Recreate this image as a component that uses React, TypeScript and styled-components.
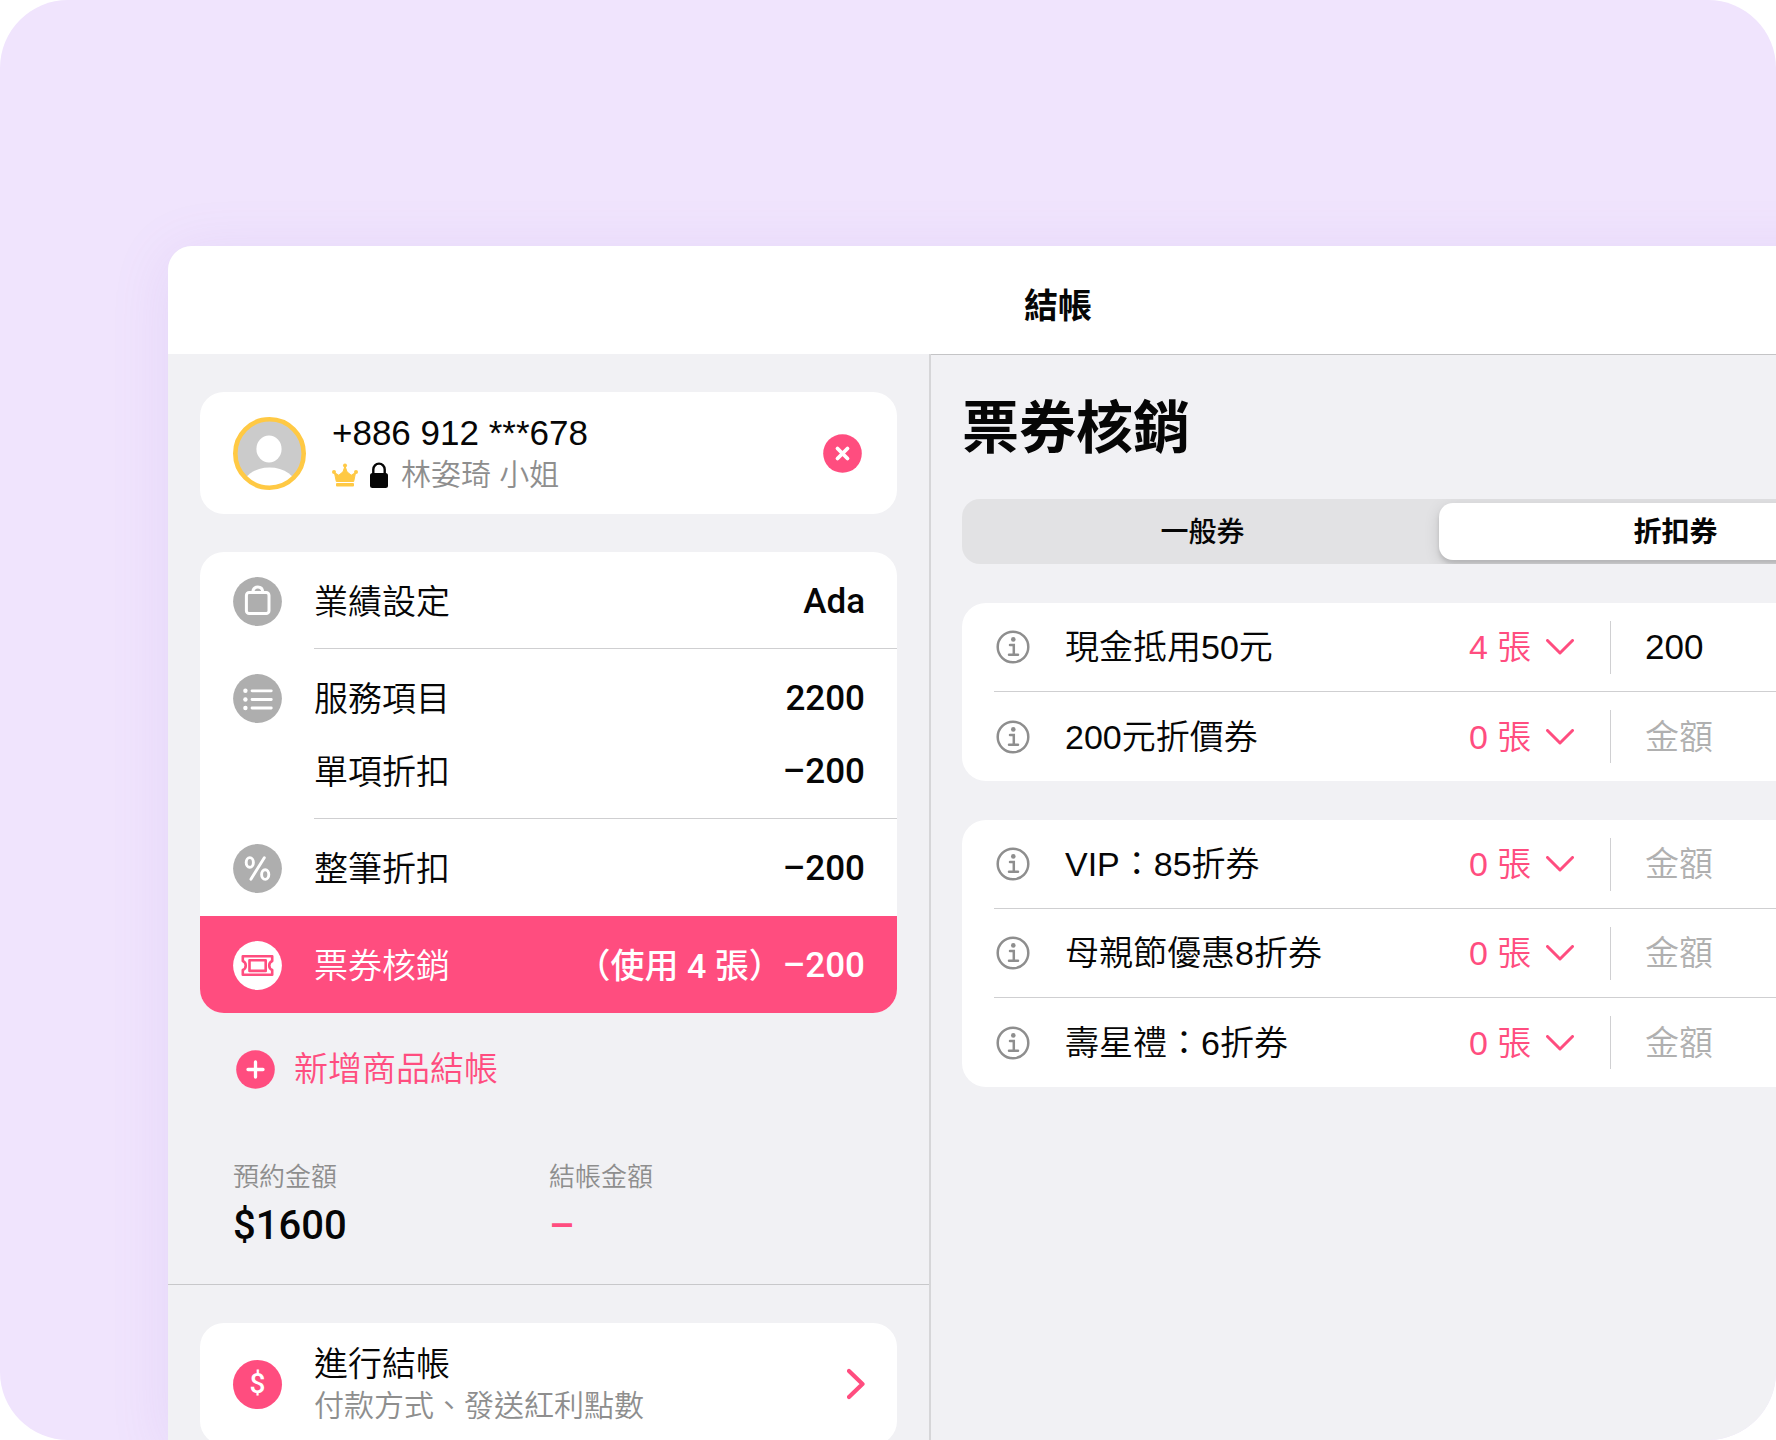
import React, { useState } from "react";
import styled, { createGlobalStyle, css } from "styled-components";

const pink = "#ff4d7f";
const line = "#cfcfd1";
const latin = `Roboto, "Noto Sans CJK TC", sans-serif`;
const body = `"Liberation Sans", "Noto Sans CJK TC", sans-serif`;

const GlobalStyle = createGlobalStyle`
  *, *::before, *::after { box-sizing: border-box; }
  body { margin: 0; background: #fff; font-family: ${body}; font-weight: 350; color: #060606; }
  button, input, select { font: inherit; color: inherit; background: none; border: 0; margin: 0; padding: 0; outline: 0; }
  button, select { cursor: pointer; }
  h1, h2, p, dl, dd, dt, ul { margin: 0; padding: 0; font-weight: inherit; }
  ul { list-style: none; }
`;

const Stage = styled.div`
  height: 100vh;
  overflow: hidden;
  border-radius: 68px;
  background: #f0e4fd;
  padding: 246px 0 0 168px;
`;

const Window = styled.div`
  display: flex;
  flex-direction: column;
  min-height: 100%;
  margin-right: -172px;
  border-radius: 24px 0 0 0;
  background: #f1f1f4;
  box-shadow: 0 8px 60px rgba(150, 110, 210, 0.12);
`;

const TitleBar = styled.header`
  display: flex;
  align-items: center;
  justify-content: center;
  height: 108px;
  padding-top: 12px;
  border-radius: 24px 0 0 0;
  background: #fff;
`;

const Title = styled.h2`
  font-size: 34px;
  font-weight: 700;
  line-height: 48px;
`;

const Panes = styled.div`
  display: flex;
  flex: 1;
`;

const Sidebar = styled.aside`
  flex: 0 0 763px;
  border-right: 2px solid #d6d6d8;
`;

const SidebarSection = styled.section`
  display: flex;
  flex-direction: column;
  padding: 38px 32px 0;
`;

const Card = styled.div`
  border-radius: 24px;
  background: #fff;
  overflow: hidden;
`;

const PersonCard = styled(Card)`
  display: flex;
  align-items: center;
  height: 122px;
  padding: 0 32px 0 33px;
  gap: 26px;
  margin-bottom: 38px;
`;

const Stack = styled.div`
  flex: 1;
  min-width: 0;
  padding-top: 2px;
  text-align: left;
`;

const Primary = styled.p`
  font-size: 34px;
  line-height: 42px;
`;

const Phone = styled.p`
  font-size: 35px;
  line-height: 42px;
`;

const Secondary = styled.p`
  display: flex;
  align-items: center;
  font-size: 30px;
  line-height: 42px;
  color: #8e8e8e;
`;

const Crown = styled.svg`
  width: 26px;
  height: 24px;
  margin-right: 12px;
`;

const Lock = styled.svg`
  width: 18px;
  height: 26px;
  margin-right: 13px;
`;

const IconButton = styled.button`
  width: 45px;
  height: 45px;
`;

const Glyph = styled.svg<{ $size: number }>`
  display: block;
  flex: none;
  width: ${(p) => p.$size}px;
  height: ${(p) => p.$size}px;
`;

const Item = styled.button<{ $active?: boolean }>`
  display: grid;
  grid-template-columns: 49px 1fr;
  column-gap: 32px;
  width: 100%;
  padding-left: 33px;
  text-align: left;
  ${(p) => p.$active && css`
    background: ${pink};
    color: #fff;
  `}
`;

const IconSlot = styled.span`
  padding-top: 25px;
`;

const ItemLines = styled.span<{ $last?: boolean }>`
  display: grid;
  row-gap: 25px;
  padding: 26px 32px 22px 0;
  border-bottom: 1px solid ${(p) => (p.$last ? "transparent" : line)};
`;

const ItemLine = styled.span`
  display: flex;
  align-items: center;
  justify-content: space-between;
  height: 48px;
  font-size: 34px;
  line-height: 48px;
`;

const Value = styled.span`
  display: flex;
  font-family: ${latin};
  font-size: 35px;
  font-weight: 500;
`;

const Used = styled.span`
  font-size: 34px;
`;

const AddButton = styled.button`
  display: flex;
  align-items: center;
  align-self: flex-start;
  gap: 16px;
  height: 48px;
  margin: 32px 0 0 33px;
  font-size: 34px;
  line-height: 48px;
  color: ${pink};
`;

const Totals = styled.dl`
  display: grid;
  grid-template-columns: 1fr 1fr;
  margin: 64px 32px 0 33px;
  padding-bottom: 29px;
`;

const TotalLabel = styled.dt`
  font-size: 26px;
  line-height: 40px;
  color: #8e8e8e;
`;

const TotalValue = styled.dd<{ $accent?: boolean }>`
  font-family: ${latin};
  font-size: 40px;
  font-weight: 500;
  line-height: 58px;
  color: ${(p) => (p.$accent ? pink : "inherit")};
`;

const Rule = styled.hr`
  height: 1px;
  margin: 0;
  border: 0;
  background: #c8c8ca;
`;

const CheckoutButton = styled.button`
  display: flex;
  align-items: center;
  gap: 32px;
  height: 122px;
  padding: 0 32px 0 33px;
  border-radius: 24px;
  background: #fff;
`;

const CoinBadge = styled.span`
  display: grid;
  place-items: center;
  width: 49px;
  height: 49px;
  border-radius: 50%;
  background: ${pink};
  color: #fff;
  font-family: ${latin};
  font-size: 28px;
  font-weight: 500;
  line-height: 28px;
`;

const Main = styled.main`
  flex: 1;
  min-width: 0;
  padding: 0 32px 0 31px;
  border-top: 1px solid #c4c4c6;
`;

const Heading = styled.h1`
  padding: 32px 0 30px;
  font-size: 57px;
  font-weight: 700;
  line-height: 82px;
`;

const Tabs = styled.div`
  display: flex;
  height: 65px;
  padding: 4px;
  border-radius: 18px;
  background: #e2e2e4;
  overflow: hidden;
  margin-bottom: 39px;
`;

const Tab = styled.button<{ $selected: boolean }>`
  flex: 1;
  padding-top: 2px;
  border-radius: 14px;
  font-size: 28px;
  font-weight: 500;
  line-height: 54px;
  ${(p) => p.$selected && css`
    background: #fff;
    font-weight: 700;
    box-shadow: 0 4px 4px rgba(0, 0, 0, 0.12), 0 4px 16px rgba(0, 0, 0, 0.12);
  `}
`;

const CouponCard = styled(Card).attrs({ as: "ul" })`
  margin-bottom: 39px;
`;

const CouponRow = styled.li`
  padding-left: 32px;
`;

const CouponInner = styled.div<{ $last: boolean }>`
  display: flex;
  align-items: center;
  height: 89px;
  border-bottom: ${(p) => (p.$last ? "0" : `1px solid ${line}`)};
  font-size: 34px;
  line-height: 48px;
`;

const CouponName = styled.span`
  flex: 1;
  padding-left: 33px;
`;

const Count = styled.span`
  display: flex;
  align-items: center;
  width: 143px;
  color: ${pink};
`;

const CountSelect = styled.select`
  appearance: none;
  width: 107px;
  height: 53px;
  padding-left: 2px;
  margin-right: -28px;
`;

const Chevron = styled.svg`
  width: 28px;
  height: 16px;
  pointer-events: none;
`;

const Amount = styled.input`
  width: 306px;
  height: 53px;
  padding-left: 34px;
  border-left: 1px solid #d0d0d2;
  font-size: 35px;
  &::placeholder { color: #b0b0b0; opacity: 1; font-size: 34px; }
`;

const Avatar = () => (
  <Glyph $size={73} viewBox="0 0 73 73" aria-hidden="true">
    <defs>
      <clipPath id="avatar-clip"><circle cx="36.5" cy="36.5" r="33" /></clipPath>
    </defs>
    <circle cx="36.5" cy="36.5" r="34" fill="#cbcbcb" />
    <g clipPath="url(#avatar-clip)" fill="#fff">
      <ellipse cx="36" cy="32" rx="12.6" ry="13.4" />
      <ellipse cx="36.5" cy="70" rx="27" ry="19.5" />
    </g>
    <circle cx="36.5" cy="36.5" r="34.2" fill="none" stroke="#ffc944" strokeWidth="4.6" />
  </Glyph>
);

const PinkCircle = ({ cross }: { cross?: boolean }) => (
  <Glyph $size={45} viewBox="0 0 45 45" aria-hidden="true">
    <circle cx="22.5" cy="22.5" r="19.3" fill={pink} />
    <path
      d={cross ? "M17.5 17.5l10 10M27.5 17.5l-10 10" : "M22.5 15v15M15 22.5h15"}
      stroke="#fff" strokeWidth={cross ? 3.8 : 3.3} strokeLinecap="round"
    />
  </Glyph>
);

const RoundIcon = ({ kind }: { kind: "bag" | "list" | "percent" | "ticket" }) => (
  <Glyph $size={49} viewBox="0 0 49 49" fill="none" aria-hidden="true">
    <circle cx="24.5" cy="24.5" r="24.4" fill={kind === "ticket" ? "#fff" : "#aeaeae"} />
    {kind === "bag" && (
      <g stroke="#fff" strokeWidth="3">
        <rect x="13.4" y="15.6" width="22.6" height="21" rx="2.8" />
        <path d="M19.8 15.2c.3-3.4 2.1-5.1 5-5.1s4.7 1.7 5 5.1" />
      </g>
    )}
    {kind === "list" && (
      <g>
        <path d="M19 16.8h19.3M19 25.5h19.3M19 34h19.3" stroke="#fff" strokeWidth="2.8" strokeLinecap="round" />
        <g fill="#fff"><circle cx="12.4" cy="16.8" r="2.2" /><circle cx="12.4" cy="25.5" r="2.2" /><circle cx="12.4" cy="34" r="2.2" /></g>
      </g>
    )}
    {kind === "percent" && (
      <g stroke="#fff" strokeWidth="2.9" strokeLinecap="round">
        <path d="M31.3 13.8L17.9 35.2" />
        <ellipse cx="16.8" cy="18.4" rx="3.6" ry="4.8" />
        <ellipse cx="32.2" cy="30.6" rx="3.6" ry="4.8" />
      </g>
    )}
    {kind === "ticket" && (
      <g stroke={pink} strokeWidth="2.6" strokeLinejoin="round">
        <path d="M9.8 15.2h29.4v4.8a4.9 4.9 0 0 0 0 9v4.7H9.8V29a4.9 4.9 0 0 0 0-9z" />
        <rect x="16.5" y="19.3" width="16.2" height="10.6" />
      </g>
    )}
  </Glyph>
);

const InfoIcon = () => (
  <Glyph $size={38} viewBox="0 0 38 38" fill="none" stroke="#8e8e8e" aria-hidden="true">
    <circle cx="19" cy="19" r="15.3" strokeWidth="2.5" />
    <path d="M16 17h3.8v9.7M15 26.8h9" strokeWidth="2.5" strokeLinecap="round" />
    <circle cx="19.3" cy="11.4" r="2.3" fill="#8e8e8e" stroke="none" />
  </Glyph>
);

type Coupon = { name: string; count: number; amount?: string };

const Coupons = ({ items }: { items: Coupon[] }) => (
  <CouponCard>
    {items.map((c, i) => (
      <CouponRow key={c.name}>
        <CouponInner $last={i === items.length - 1}>
          <InfoIcon />
          <CouponName>{c.name}</CouponName>
          <Count>
            <CountSelect aria-label={`${c.name} 張數`} defaultValue={c.count}>
              {[0, 1, 2, 3, 4].map((n) => <option key={n} value={n}>{n} 張</option>)}
            </CountSelect>
            <Chevron viewBox="0 0 28 16" fill="none" aria-hidden="true">
              <path d="M1.5 1.5L14 14 26.5 1.5" stroke={pink} strokeWidth="3" strokeLinecap="round" strokeLinejoin="round" />
            </Chevron>
          </Count>
          <Amount aria-label={`${c.name} 金額`} placeholder="金額" defaultValue={c.amount} />
        </CouponInner>
      </CouponRow>
    ))}
  </CouponCard>
);

export default function App() {
  const [tab, setTab] = useState(1);
  return (
    <>
      <GlobalStyle />
      <Stage>
        <Window>
          <TitleBar><Title>結帳</Title></TitleBar>
          <Panes>
            <Sidebar>
              <SidebarSection>
                <PersonCard>
                  <Avatar />
                  <Stack>
                    <Phone>+886 912 ***678</Phone>
                    <Secondary>
                      <Crown viewBox="0 0 26 24" fill="#ffc944" aria-hidden="true">
                        <path d="M4.3 18.5L2.4 9.6 6.8 12.2 11 8.8 13 3l2 5.8 4.2 3.4 4.4-2.6-1.9 8.9z" stroke="#ffc944" strokeWidth="1" strokeLinejoin="round" />
                        <rect x="4" y="20" width="18" height="3.4" rx="1" />
                        <circle cx="2" cy="9" r="2" /><circle cx="24" cy="9" r="2" /><circle cx="13" cy="2.4" r="2" />
                      </Crown>
                      <Lock viewBox="0 0 18 26" aria-hidden="true">
                        <rect x="0" y="11" width="18" height="15" rx="2.5" fill="#060606" />
                        <path d="M3.3 12V7.5a5.7 5.9 0 0 1 11.4 0V12" fill="none" stroke="#060606" strokeWidth="2.4" />
                      </Lock>
                      林姿琦 小姐
                    </Secondary>
                  </Stack>
                  <IconButton aria-label="移除"><PinkCircle cross /></IconButton>
                </PersonCard>

                <Card>
                  <Item>
                    <IconSlot><RoundIcon kind="bag" /></IconSlot>
                    <ItemLines>
                      <ItemLine>業績設定<Value>Ada</Value></ItemLine>
                    </ItemLines>
                  </Item>
                  <Item>
                    <IconSlot><RoundIcon kind="list" /></IconSlot>
                    <ItemLines>
                      <ItemLine>服務項目<Value>2200</Value></ItemLine>
                      <ItemLine>單項折扣<Value>–200</Value></ItemLine>
                    </ItemLines>
                  </Item>
                  <Item>
                    <IconSlot><RoundIcon kind="percent" /></IconSlot>
                    <ItemLines $last>
                      <ItemLine>整筆折扣<Value>–200</Value></ItemLine>
                    </ItemLines>
                  </Item>
                  <Item $active>
                    <IconSlot><RoundIcon kind="ticket" /></IconSlot>
                    <ItemLines $last>
                      <ItemLine>票券核銷<Value><Used>（使用 4 張）</Used>–200</Value></ItemLine>
                    </ItemLines>
                  </Item>
                </Card>

                <AddButton><PinkCircle />新增商品結帳</AddButton>

                <Totals>
                  <div>
                    <TotalLabel>預約金額</TotalLabel>
                    <TotalValue>$1600</TotalValue>
                  </div>
                  <div>
                    <TotalLabel>結帳金額</TotalLabel>
                    <TotalValue $accent>–</TotalValue>
                  </div>
                </Totals>
              </SidebarSection>
              <Rule />
              <SidebarSection>
                <CheckoutButton>
                  <CoinBadge>$</CoinBadge>
                  <Stack>
                    <Primary>進行結帳</Primary>
                    <Secondary>付款方式、發送紅利點數</Secondary>
                  </Stack>
                  <svg width="18" height="32" viewBox="0 0 18 32" fill="none" aria-hidden="true">
                    <path d="M2 3L15.5 16 2 29" stroke={pink} strokeWidth="4.2" strokeLinecap="round" strokeLinejoin="round" />
                  </svg>
                </CheckoutButton>
              </SidebarSection>
            </Sidebar>

            <Main>
              <Heading>票券核銷</Heading>
              <Tabs role="tablist">
                {["一般券", "折扣券"].map((t, i) => (
                  <Tab key={t} role="tab" aria-selected={tab === i} $selected={tab === i} onClick={() => setTab(i)}>{t}</Tab>
                ))}
              </Tabs>
              <Coupons items={[
                { name: "現金抵用50元", count: 4, amount: "200" },
                { name: "200元折價券", count: 0 },
              ]} />
              <Coupons items={[
                { name: "VIP：85折券", count: 0 },
                { name: "母親節優惠8折券", count: 0 },
                { name: "壽星禮：6折券", count: 0 },
              ]} />
            </Main>
          </Panes>
        </Window>
      </Stage>
    </>
  );
}
